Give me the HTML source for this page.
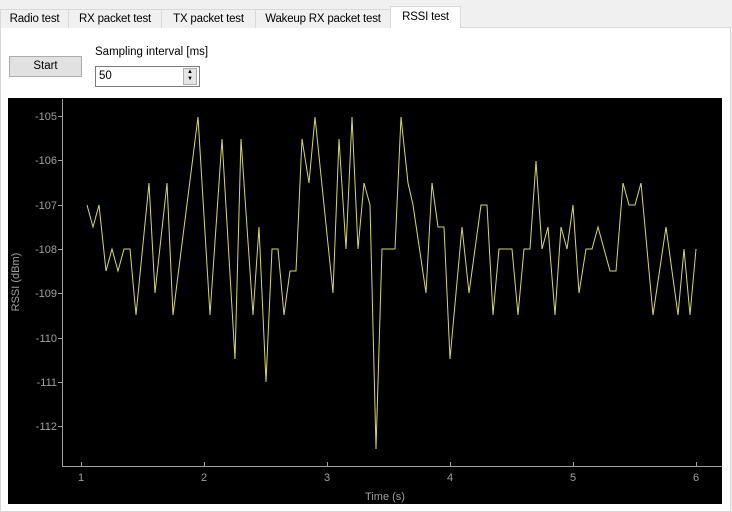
<!DOCTYPE html>
<html><head><meta charset="utf-8"><style>
*{margin:0;padding:0;box-sizing:border-box}
body{width:732px;height:512px;background:#f0f0f0;font-family:"Liberation Sans",sans-serif;font-size:11.5px;color:#000;position:relative;overflow:hidden}
.tab{position:absolute;top:9px;height:19px;border:1px solid #d9d9d9;border-bottom:none;background:#f0f0f0;text-align:center;line-height:18px;font-size:11.5px;letter-spacing:-0.2px;white-space:nowrap}
.sel{top:6px;height:22px;background:#fff;border-color:#d9d9d9;line-height:21px;z-index:2}
.pane{position:absolute;left:0;top:27px;width:731px;height:485px;background:#fff;border:1px solid #d9d9d9}
</style></head><body>
<div class="pane"></div>
<div class="tab" style="left:0;width:69px">Radio test</div>
<div class="tab" style="left:68px;width:94px">RX packet test</div>
<div class="tab" style="left:161px;width:95px">TX packet test</div>
<div class="tab" style="left:255px;width:136px">Wakeup RX packet test</div>
<div class="tab sel" style="left:390px;width:71px">RSSI test</div>
<div style="position:absolute;left:9px;top:56px;width:73px;height:21px;background:#e1e1e1;border:1px solid #adadad;text-align:center;line-height:19px">Start</div>
<div style="position:absolute;left:95px;top:46px">Sampling interval [ms]</div>
<div style="position:absolute;left:95px;top:66px;width:105px;height:21px;background:#fff;border:1px solid #7a7a7a;line-height:19px;padding-left:3px">50
<div style="position:absolute;right:2px;top:1px;width:14px;height:17px;background:#e5e5e5;border:1px solid #adadad;font-size:6px;line-height:7px;text-align:center">▲<br>▼</div></div>
<svg style="position:absolute;left:0;top:0" width="732" height="512">
<rect x="8" y="98" width="714" height="406" fill="#000"/>
<g stroke="#a0a0a0" stroke-width="1" fill="none">
<path d="M62.5 99V466.5H722"/>
<path d="M58 116.5h4M58 160.5h4M58 205.5h4M58 249.5h4M58 293.5h4M58 338.5h4M58 382.5h4M58 426.5h4"/>
<path d="M81.5 466v-4M204.5 466v-4M327.5 466v-4M450.5 466v-4M573.5 466v-4M696.5 466v-4"/>
</g>
<g fill="#a0a0a0" font-size="11" font-family="Liberation Sans,sans-serif">
<g text-anchor="end">
<text x="57" y="120">-105</text><text x="57" y="164">-106</text><text x="57" y="209">-107</text><text x="57" y="253">-108</text><text x="57" y="297">-109</text><text x="57" y="342">-110</text><text x="57" y="386">-111</text><text x="57" y="430">-112</text></g>
<g text-anchor="middle">
<text x="81" y="481">1</text><text x="204" y="481">2</text><text x="327" y="481">3</text><text x="450" y="481">4</text><text x="573" y="481">5</text><text x="696" y="481">6</text>
<text x="385" y="500">Time (s)</text>
<text transform="translate(19,282) rotate(-90)">RSSI (dBm)</text></g>
</g>
<polyline fill="none" stroke="#d8d860" stroke-width="1" points="87,205 93,227 99,205 106,271 112,249 118,271 124,249 130,249 136,315 149,183 155,293 167,183 173,315 198,117 210,315 222,139 235,359 241,139 253,315 259,227 266,382 272,249 278,249 284,315 290,271 296,271 302,139 309,183 315,117 333,293 339,139 346,249 352,117 358,249 364,183 370,205 376,449 382,249 395,249 401,117 408,183 413,205 426,293 432,183 438,227 444,227 450,359 462,227 469,293 481,205 487,205 493,315 499,249 512,249 518,315 524,249 530,249 536,161 542,249 548,227 555,315 561,227 567,249 573,205 579,293 586,249 592,249 598,227 610,271 616,271 623,183 629,205 635,205 641,183 653,315 666,227 678,315 684,249 690,315 696,249"/>
</svg>
</body></html>
